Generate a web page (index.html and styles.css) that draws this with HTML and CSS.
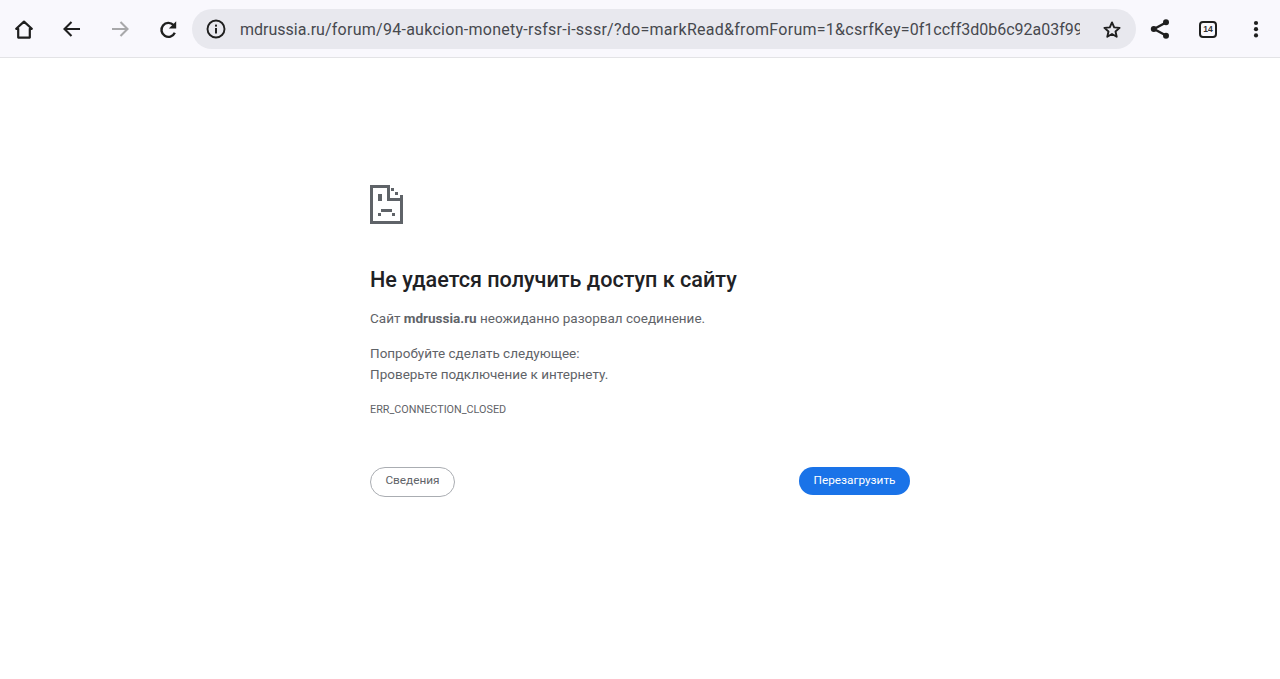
FILE: index.html
```html
<!DOCTYPE html>
<html lang="ru">
<head>
<meta charset="utf-8">
<title>mdrussia.ru</title>
<link rel="stylesheet" href="styles.css">
</head>
<body>
<header class="toolbar">
  <button class="tool">
    <svg viewBox="0 0 24 24" width="24" height="24"><path d="M12 4.6 L4.2 11.8 H6.2 V20.6 H17.8 V11.8 H19.8 Z" fill="none" stroke="#1f1f1f" stroke-width="2.2" stroke-linejoin="round"/></svg>
  </button>
  <button class="tool">
    <svg viewBox="0 0 24 24" width="24" height="24"><path d="M20 12H5M11.5 5 4.5 12l7 7" fill="none" stroke="#1f1f1f" stroke-width="2.1"/></svg>
  </button>
  <button class="tool">
    <svg viewBox="0 0 24 24" width="24" height="24"><path d="M4 12H19M12.5 5l7 7-7 7" fill="none" stroke="#a8a8aa" stroke-width="2.1"/></svg>
  </button>
  <button class="tool">
    <svg viewBox="0 0 24 24" width="24" height="24"><path d="M18.8 15.8A7 7 0 1 1 17.5 8" fill="none" stroke="#1f1f1f" stroke-width="2.4"/><path d="M20.2 4.2V11.6H12.8Z" fill="#1f1f1f"/></svg>
  </button>
  <div class="omnibox">
    <svg class="info" viewBox="0 0 24 24" width="24" height="24"><circle cx="12" cy="12" r="8.5" fill="none" stroke="#1f1f1f" stroke-width="1.9"/><rect x="11" y="11" width="2" height="5.5" fill="#1f1f1f"/><rect x="11" y="7.6" width="2" height="2" fill="#1f1f1f"/></svg>
    <div class="url"><span class="host">mdrussia.ru</span><span class="path">/forum/94-aukcion-monety-rsfsr-i-sssr/?do=markRead&amp;fromForum=1&amp;csrfKey=</span>0f1ccff3d0b6c92a03f99</div>
    <svg class="star" viewBox="0 0 24 24" width="24" height="24"><path d="M12 5.4 14.2 10.4 19.6 10.9 15.5 14.5 16.7 19.8 12 17 7.3 19.8 8.5 14.5 4.4 10.9 9.8 10.4Z" fill="none" stroke="#1f1f1f" stroke-width="1.9" stroke-linejoin="round"/></svg>
  </div>
  <button class="tool share">
    <svg viewBox="0 0 24 24" width="24" height="24"><path d="M18 5.5 6 12l12 6.5" fill="none" stroke="#1f1f1f" stroke-width="2.4"/><circle cx="18" cy="5.2" r="3" fill="#1f1f1f"/><circle cx="5.8" cy="12" r="3" fill="#1f1f1f"/><circle cx="18" cy="18.8" r="3" fill="#1f1f1f"/></svg>
  </button>
  <button class="tool tabs"><span class="tabcount">14</span></button>
  <button class="tool">
    <svg viewBox="0 0 24 24" width="24" height="24"><circle cx="12" cy="6" r="2.1" fill="#1f1f1f"/><circle cx="12" cy="12.2" r="2.1" fill="#1f1f1f"/><circle cx="12" cy="18.4" r="2.1" fill="#1f1f1f"/></svg>
  </button>
</header>
<main class="error">
  <svg class="sad" viewBox="0 0 33 39" width="33" height="39" shape-rendering="crispEdges">
    <path d="M0 0H20V13H33V39H0ZM3 3V36H30V16H17V3Z" fill="#5f6368"/>
    <rect x="21" y="3" width="3" height="3" fill="#5f6368"/>
    <rect x="25" y="7" width="3" height="3" fill="#5f6368"/>
    <rect x="30" y="10" width="3" height="3" fill="#5f6368"/>
    <rect x="8" y="9" width="4" height="7" fill="#5f6368"/>
    <rect x="11" y="24" width="11" height="3" fill="#5f6368"/>
    <rect x="8" y="28" width="3" height="3" fill="#5f6368"/>
    <rect x="22" y="28" width="3" height="3" fill="#5f6368"/>
  </svg>
  <h1 class="title">Не удается получить доступ к сайту</h1>
  <p class="lead">Сайт <strong>mdrussia.ru</strong> неожиданно разорвал соединение.</p>
  <p class="tips">Попробуйте сделать следующее:<br>Проверьте подключение к интернету.</p>
  <p class="code">ERR_CONNECTION_CLOSED</p>
  <div class="actions">
    <button class="details">Сведения</button>
    <button class="reload">Перезагрузить</button>
  </div>
</main>
</body>
</html>
```
FILE: styles.css
```css
html, body {
  margin: 0;
  padding: 0;
  height: 100%;
  background: #fff;
  overflow: hidden;
  font-family: Roboto, "Noto Sans", sans-serif;
}
.toolbar {
  height: 58px;
  box-sizing: border-box;
  background: #f9f8fd;
  border-bottom: 1px solid #e3e3e6;
  padding: 1px 0 0;
  display: flex;
  align-items: center;
}
.tool {
  flex: none;
  width: 48px;
  height: 48px;
  border: 0;
  padding: 0;
  background: none;
  display: flex;
  align-items: center;
  justify-content: center;
}
.omnibox {
  flex: none;
  width: 944px;
  height: 40px;
  box-sizing: border-box;
  border-radius: 20px;
  background: #e8e8ee;
  display: flex;
  align-items: center;
  padding: 0 12px;
}
.info { flex: none; }
.url {
  flex: none;
  width: 840px;
  margin-left: 12px;
  overflow: hidden;
  white-space: nowrap;
  font-size: 16px;
  color: #47494e;
}
.path { letter-spacing: 0.27px; }
.star { flex: none; margin-left: 20px; }
.tabcount {
  width: 14px;
  height: 13px;
  border: 2px solid #1f1f1f;
  border-radius: 4px;
  display: flex;
  align-items: center;
  justify-content: center;
  font-size: 8.5px;
  font-weight: 700;
  color: #333;
}
.error {
  width: 540px;
  margin: 127px auto 0;
  color: #5f6368;
  font-size: 13.5px;
}
.sad { display: block; }
.title {
  margin: 41px 0 0;
  font-size: 21.6px;
  line-height: 29px;
  font-weight: 500;
  color: #202124;
}
.lead {
  margin: 14px 0 0;
  line-height: 21px;
}
.lead strong { font-weight: 700; }
.tips {
  margin: 14px 0 0;
  line-height: 21px;
}
.code {
  margin: 17px 0 0;
  font-size: 10.8px;
  line-height: 16px;
  color: #5f6368;
}
.actions {
  margin-top: 49px;
  display: flex;
  justify-content: space-between;
  align-items: flex-start;
}
.details, .reload {
  font-family: inherit;
  font-size: 11.8px;
  font-weight: 400;
  border-radius: 15px;
}
.details {
  height: 30px;
  width: 85px;
  padding: 0 0 4px;
  background: #fff;
  border: 1px solid #aaadb2;
  color: #5f6368;
}
.reload {
  height: 28px;
  width: 111px;
  padding: 0 0 2px;
  background: #1a73e8;
  border: 0;
  color: #fff;
}
```
